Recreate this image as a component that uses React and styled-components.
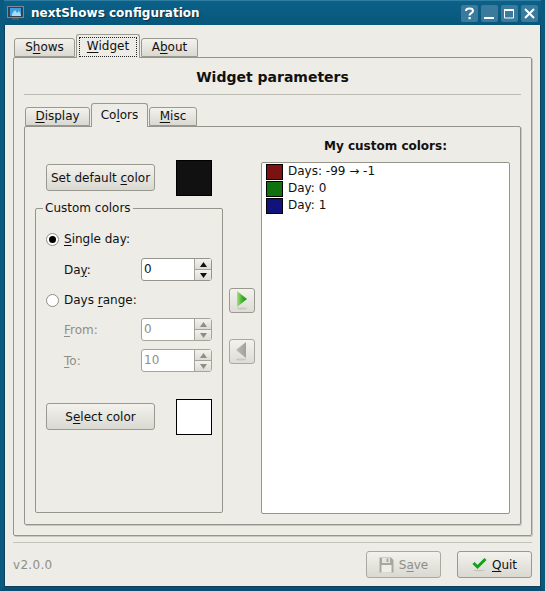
import React from 'react';
import styled, { createGlobalStyle } from 'styled-components';

const Global = createGlobalStyle`
  html, body { margin: 0; padding: 0; background: #0b5a80; }
  * { box-sizing: border-box; }
`;
const Win = styled.div`
  width: 545px; height: 591px; display: flex; flex-direction: column;
  background: #edece6; color: #111; overflow: hidden;
  font: 12px/14px "DejaVu Sans", sans-serif;
  border: 4px solid #0a5a80; border-top: 0; border-bottom-color: #0a4f72;
  box-shadow: inset 0 0 0 1px #0c3f5c;
`;
const TitleBar = styled.div`
  height: 25px; margin: 0 -4px; flex: none; display: flex; align-items: center;
  padding: 0 7px 0 7px; background: linear-gradient(#0c6189, #08577c);
  border-top: 1px solid #2f7da0;
  color: #fff; font-weight: bold; font-size: 12px;
  text-shadow: 1px 1px 1px #06344c;
`;
const AppIcon = styled.svg`width: 17px; height: 14px; margin-right: 7px; flex: none;`;
const TitleText = styled.div`flex: 1;`;
const WinBtn = styled.div`
  width: 17px; height: 17px; margin-left: 3px; border-radius: 2px;
  background: #3a7b9d; display: flex; align-items: center; justify-content: center;
`;
const Content = styled.div`
  flex: 1; display: flex; flex-direction: column; padding: 9px 9px 0 9px; min-height: 0;
`;
const TabBar = styled.div`
  display: flex; align-items: flex-end; flex: none;
  height: ${p => p.$h}px; padding-left: ${p => p.$pl}px; position: relative; z-index: 1;
`;
const Tab = styled.div`
  width: ${p => p.$w}px; height: ${p => (p.$active ? p.$h + 1 : p.$h - 4)}px;
  margin-bottom: ${p => (p.$active ? -1 : 0)}px; margin-right: 1px;
  display: flex; align-items: center; justify-content: center;
  padding-bottom: ${p => (p.$active ? 2 : 1)}px;
  border: 1px solid #9a998f; border-bottom: ${p => (p.$active ? 0 : 1)}px solid #9a998f;
  border-radius: 3px 3px 0 0;
  background: ${p => (p.$active ? '#edece6' : 'linear-gradient(#f3f2ed, #d9d8d1)')};
  position: relative;
`;
const FocusRing = styled.div`
  position: absolute; inset: 2px 2px 1px 2px; border: 1px dotted #222;
`;
const Pane = styled.div`
  flex: ${p => (p.$grow ? 1 : 'none')}; display: flex; flex-direction: column;
  border: 1px solid #96958c; border-radius: 2px; min-height: 0;
  box-shadow: 1px 1px 0 #c9c8c0;
`;
const OuterPane = styled(Pane)`height: 479px; padding: 0 10px 10px 10px;`;
const PageTitle = styled.div`
  height: 36px; flex: none; display: flex; align-items: center; justify-content: center;
  font-weight: bold; font-size: 14px; padding-top: 2px;
`;
const Rule = styled.div`height: 1px; background: #bcbbb2; flex: none;`;
const InnerWrap = styled.div`flex: 1; display: flex; flex-direction: column; padding-top: 8px; min-height: 0;`;
const InnerPane = styled(Pane)`
  flex: 1; display: grid; grid-template-columns: 188px 38px 249px;
  padding: 0 10px 10px 10px;
`;
const LeftCol = styled.div`display: flex; flex-direction: column; padding-top: 33px;`;
const ColorRow = styled.div`
  display: flex; align-items: center; justify-content: space-between;
  padding: 0 ${p => p.$pr}px 0 ${p => p.$pl || 0}px; margin-top: ${p => p.$mt || 0}px;
`;
const Button = styled.div`
  height: 27px; width: ${p => p.$w}px; flex: none; display: flex; align-items: center; justify-content: center;
  gap: ${p => p.$gap || 0}px; border: 1px solid ${p => (p.$off ? '#aaa99f' : '#9a998f')}; border-radius: 3px;
  color: ${p => (p.$off ? '#8f8e86' : '#111')};
  background: linear-gradient(#f3f2ed, #d9d8d1);
`;
const SwatchButton = styled(Button)`margin-bottom: 1px;`;
const Swatch = styled.div`
  width: 36px; height: 36px; border: 1px solid #000; background: ${p => p.$c};
`;
const Group = styled.fieldset`
  margin: 5px 0 0 0; padding: 0; height: 312px; min-width: 0; width: 188px;
  border: 1px solid #96958c; border-radius: 2px;
`;
const Legend = styled.legend`margin-left: 7px; padding: 0 2px; line-height: 14px;`;
const GroupBody = styled.div`display: flex; flex-direction: column; padding: 14px 10px 0 10px;`;
const RadioRow = styled.div`
  height: 20px; display: flex; align-items: center; gap: 5px; margin-top: ${p => p.$mt || 0}px;
`;
const Radio = styled.div`
  width: 13px; height: 13px; border-radius: 50%; border: 1px solid #8f8e86; background: #fff; flex: none;
  display: flex; align-items: center; justify-content: center;
`;
const Dot = styled.div`width: 7px; height: 7px; border-radius: 50%; background: #000;`;
const SpinRow = styled.div`
  display: flex; align-items: center; height: 23px; padding-left: 18px; margin-top: ${p => p.$mt}px;
  color: ${p => (p.$off ? '#8f8e86' : '#111')};
`;
const SpinLabel = styled.div`width: 77px;`;
const Spin = styled.div`
  width: 71px; height: 23px; display: flex; border: 1px solid ${p => (p.$off ? '#a5a49b' : '#96958c')}; border-radius: 3px; background: #fff;
`;
const SpinText = styled.div`
  flex: 1; padding-left: 2px; line-height: 21px; color: ${p => (p.$off ? '#8f8e86' : '#111')};
`;
const SpinBtns = styled.div`
  width: 17px; display: flex; flex-direction: column; border-left: 1px solid #a5a49b;
`;
const SpinBtn = styled.div`
  flex: 1; display: flex; align-items: center; justify-content: center;
  background: linear-gradient(#f3f2ed, #dcdbd4);
  & + & { border-top: 1px solid #a5a49b; }
`;
const Tri = styled.svg`width: 7px; height: 5px;`;
const MidCol = styled.div`display: flex; flex-direction: column; align-items: center; padding: 161px 0 0 0;`;
const ArrowBtn = styled.div`
  width: 26px; height: 25px; margin-top: ${p => p.$mt || 0}px; display: flex; align-items: center; justify-content: center;
  padding-right: ${p => (p.$off ? 3 : 0)}px;
  border: 1px solid ${p => (p.$off ? '#aaa99f' : '#9a998f')}; border-radius: 3px;
  background: linear-gradient(#f3f2ed, #dedcd6);
`;
const RightCol = styled.div`display: flex; flex-direction: column;`;
const ListTitle = styled.div`
  height: 35px; flex: none; display: flex; align-items: center; justify-content: center; font-weight: bold;
  padding-top: 2px;
`;
const List = styled.div`
  flex: 1; background: #fff; border: 1px solid #96958c; border-radius: 2px; padding: 0 4px;
  display: flex; flex-direction: column;
`;
const ListItem = styled.div`height: 17px; display: flex; align-items: center; gap: 5px;`;
const ItemSwatch = styled.div`width: 17px; height: 16px; border: 1px solid #000; background: ${p => p.$c};`;
const ItemText = styled.span`margin-bottom: 1px;`;
const Footer = styled.div`
  flex: none; margin-top: 6px; border-top: 1px solid #c4c3ba; height: 44px;
  display: flex; align-items: center;
`;
const Version = styled.div`flex: 1; color: #8f8e86; letter-spacing: 0.3px;`;
const Mn = styled.u`text-underline-offset: 2px; text-decoration-thickness: 1px;`;
const FooterGap = styled.div`width: 16px; flex: none;`;

const Arrow = ({ id, d, stops }) => (
  <svg width="12" height="19" viewBox="0 0 12 19">
    <defs>
      <linearGradient id={id} x1="0" x2="1" y1="0" y2="0">
        {stops.map(([o, c]) => <stop key={o} offset={o} stopColor={c} />)}
      </linearGradient>
    </defs>
    <ellipse cx="6" cy="17.5" rx="5" ry="1" fill="#c9c8c0" />
    <path d={d} fill={`url(#${id})`} />
  </svg>
);

const up = <Tri viewBox="0 0 7 5"><path d="M3.5 0 L7 5 H0 Z" fill="#111" /></Tri>;
const down = <Tri viewBox="0 0 7 5"><path d="M0 0 H7 L3.5 5 Z" fill="#111" /></Tri>;
const upOff = <Tri viewBox="0 0 7 5"><path d="M3.5 0 L7 5 H0 Z" fill="#8f8e86" /></Tri>;
const downOff = <Tri viewBox="0 0 7 5"><path d="M0 0 H7 L3.5 5 Z" fill="#8f8e86" /></Tri>;

function SpinBox({ value, off }) {
  return (
    <Spin $off={off}>
      <SpinText $off={off}>{value}</SpinText>
      <SpinBtns>
        <SpinBtn>{off ? upOff : up}</SpinBtn>
        <SpinBtn>{off ? downOff : down}</SpinBtn>
      </SpinBtns>
    </Spin>
  );
}

export default function App() {
  return (
    <Win>
      <Global />
      <TitleBar>
        <AppIcon viewBox="0 0 17 14">
          <rect x="0.5" y="0.5" width="16" height="11" fill="#33424c" stroke="#7b8b96" />
          <rect x="3" y="2" width="11" height="8" fill="#3f9be0" />
          <path d="M5 8 L8 4 L10 7 L12 5 L14 9 V10 H5 Z" fill="#a8def5" />
          <rect x="5" y="12" width="7" height="2" fill="#4d5d68" />
        </AppIcon>
        <TitleText>nextShows configuration</TitleText>
        <WinBtn>
          <svg width="11" height="13" viewBox="0 0 11 13"><path d="M2 4 C2 0.8 9 0.8 9 4 C9 6.2 5.5 6 5.5 8.5" fill="none" stroke="#fff" strokeWidth="2" /><rect x="4.5" y="10" width="2.2" height="2.2" fill="#fff" /></svg>
        </WinBtn>
        <WinBtn>
          <svg width="13" height="13" viewBox="0 0 13 13"><rect x="1" y="10" width="10" height="2" fill="#fff" /></svg>
        </WinBtn>
        <WinBtn>
          <svg width="13" height="13" viewBox="0 0 13 13"><path d="M1.5 2.5 H10.5 V11 H1.5 Z" fill="none" stroke="#fff" strokeWidth="1" /><rect x="1" y="2" width="10" height="2" fill="#fff" /></svg>
        </WinBtn>
        <WinBtn>
          <svg width="13" height="13" viewBox="0 0 13 13"><path d="M2 2 L11 11 M11 2 L2 11" stroke="#fff" strokeWidth="2" /></svg>
        </WinBtn>
      </TitleBar>
      <Content>
        <TabBar $h={23} $pl={1}>
          <Tab $w={61} $h={23}><span>S<Mn>h</Mn>ows</span></Tab>
          <Tab $w={64} $h={23} $active><FocusRing /><span><Mn>W</Mn>idget</span></Tab>
          <Tab $w={57} $h={23}><span>A<Mn>b</Mn>out</span></Tab>
        </TabBar>
        <OuterPane>
          <PageTitle>Widget parameters</PageTitle>
          <Rule />
          <InnerWrap>
            <TabBar $h={23} $pl={1}>
              <Tab $w={65} $h={23}><span><Mn>D</Mn>isplay</span></Tab>
              <Tab $w={57} $h={23} $active><span>Co<Mn>l</Mn>ors</span></Tab>
              <Tab $w={48} $h={23}><span><Mn>M</Mn>isc</span></Tab>
            </TabBar>
            <InnerPane>
              <LeftCol>
                <ColorRow $pl={11} $pr={11}>
                  <SwatchButton $w={109}><span>Set default <Mn>c</Mn>olor</span></SwatchButton>
                  <Swatch $c="#111" />
                </ColorRow>
                <Group>
                  <Legend>Custom colors</Legend>
                  <GroupBody>
                    <RadioRow><Radio><Dot /></Radio><span><Mn>S</Mn>ingle day:</span></RadioRow>
                    <SpinRow $mt={9}><SpinLabel>Da<Mn>y</Mn>:</SpinLabel><SpinBox value="0" /></SpinRow>
                    <RadioRow $mt={9}><Radio /><span>Days <Mn>r</Mn>ange:</span></RadioRow>
                    <SpinRow $mt={8} $off><SpinLabel><Mn>F</Mn>rom:</SpinLabel><SpinBox value="0" off /></SpinRow>
                    <SpinRow $mt={8} $off><SpinLabel><Mn>T</Mn>o:</SpinLabel><SpinBox value="10" off /></SpinRow>
                    <ColorRow $mt={27} $pr={0}>
                      <SwatchButton $w={109}><span>S<Mn>e</Mn>lect color</span></SwatchButton>
                      <Swatch $c="#fff" />
                    </ColorRow>
                  </GroupBody>
                </Group>
              </LeftCol>
              <MidCol>
                <ArrowBtn>
                  <Arrow id="ga" d="M1 0 L11 8 L1 16 Z" stops={[[0, '#a6e084'], [0.5, '#3fb52c'], [1, '#1f8f17']]} />
                </ArrowBtn>
                <ArrowBtn $mt={26} $off>
                  <Arrow id="gb" d="M11 0 L1 8 L11 16 Z" stops={[[0, '#bdbcb4'], [1, '#a2a199']]} />
                </ArrowBtn>
              </MidCol>
              <RightCol>
                <ListTitle>My custom colors:</ListTitle>
                <List>
                  <ListItem><ItemSwatch $c="#7c1212" /><ItemText>Days: -99 → -1</ItemText></ListItem>
                  <ListItem><ItemSwatch $c="#0f720f" /><ItemText>Day: 0</ItemText></ListItem>
                  <ListItem><ItemSwatch $c="#12127c" /><ItemText>Day: 1</ItemText></ListItem>
                </List>
              </RightCol>
            </InnerPane>
          </InnerWrap>
        </OuterPane>
        <Footer>
          <Version>v2.0.0</Version>
          <Button $w={75} $gap={5} $off>
            <svg width="15" height="16" viewBox="0 0 15 16">
              <path d="M0.5 0.5 H12 L14.5 3 V15.5 H0.5 Z" fill="#a9a89f" />
              <rect x="3" y="1" width="8" height="5" fill="#e6e5df" />
              <rect x="7.5" y="1.5" width="2" height="3.5" fill="#a9a89f" />
              <rect x="2.5" y="8" width="10" height="7.5" fill="#efeee9" />
            </svg>
            <span>S<Mn>a</Mn>ve</span>
          </Button>
          <FooterGap />
          <Button $w={75} $gap={5}>
            <svg width="15" height="15" viewBox="0 0 15 15">
              <ellipse cx="7" cy="13.5" rx="6" ry="0.8" fill="#c4c3ba" />
              <path d="M1.5 6 L5.5 10 L13.5 2" fill="none" stroke="#0fa31a" strokeWidth="3" />
            </svg>
            <span><Mn>Q</Mn>uit</span>
          </Button>
        </Footer>
      </Content>
    </Win>
  );
}
